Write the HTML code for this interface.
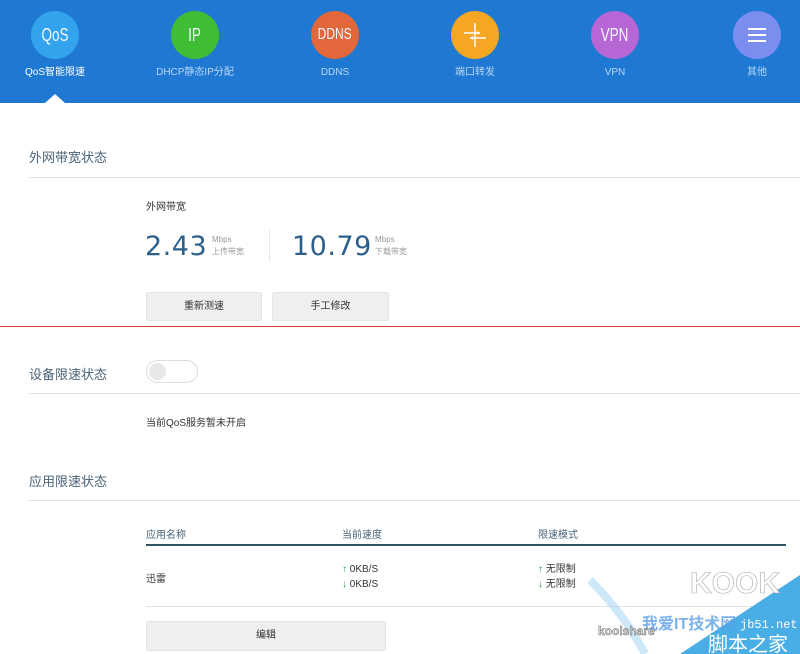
<!DOCTYPE html>
<html><head><meta charset="utf-8"><style>
*{margin:0;padding:0;box-sizing:border-box}
body{width:800px;height:654px;overflow:hidden;background:#fff;font-family:"Liberation Sans","Noto Sans CJK SC",sans-serif;position:relative;color:#333}
.hd{position:absolute;left:0;top:0;width:800px;height:103px;background:#1f79d2}
.it{position:absolute;top:11px;width:120px;text-align:center;margin-left:-60px}
.c{width:48px;height:48px;border-radius:50%;margin:0 auto;color:#f0f8ff;font-size:18px;line-height:48px;overflow:hidden;position:relative}
.c span{display:inline-block;transform:scaleX(0.75)}
.lb{font-size:10px;color:#b9d6f5;margin-top:7px;height:14px;line-height:14px}
.a{position:absolute}
.t{font-size:13px;color:#4a6378}
.ln{position:absolute;height:1px;background:#e2e2e2}
.btn{position:absolute;background:#efefef;border:1px solid #e4e4e4;border-radius:2px;font-size:10px;text-align:center;color:#333}
.s{font-size:10px}
.num{font-size:27px;color:#2d5f8d;font-family:"DejaVu Sans","Liberation Sans",sans-serif;letter-spacing:0.5px}
.sm{font-size:8px;color:#999;line-height:12px}
.g{color:#2e9a3e}
</style></head><body>
<div class="hd">
 <div class="it" style="left:55px"><div class="c" style="background:#34a3ee"><span>QoS</span></div><div class="lb" style="color:#fff">QoS智能限速</div></div>
 <div class="it" style="left:195px"><div class="c" style="background:#3fbd34"><span>IP</span></div><div class="lb">DHCP静态IP分配</div></div>
 <div class="it" style="left:335px"><div class="c" style="background:#e2673a;font-size:16px"><span>DDNS</span></div><div class="lb">DDNS</div></div>
 <div class="it" style="left:475px"><div class="c" style="background:#f5a623"><svg width="48" height="48" style="position:absolute;left:0;top:0"><path d="M24 12V36M13 22H29M19 27H35" stroke="#fff" stroke-width="1.5" fill="none"/><path d="M29 22l-3-2v4zM19 27l3-2v4z" fill="#fff"/></svg></div><div class="lb">端口转发</div></div>
 <div class="it" style="left:615px"><div class="c" style="background:#b766d6"><span>VPN</span></div><div class="lb">VPN</div></div>
 <div class="it" style="left:757px"><div class="c" style="background:#7b8ef0"><svg width="48" height="48" style="position:absolute;left:0;top:0"><path d="M15 18H33M15 24H33M15 30H33" stroke="#fff" stroke-width="2"/></svg></div><div class="lb">其他</div></div>
 <div class="a" style="left:45px;top:94px;width:0;height:0;border-left:10px solid transparent;border-right:10px solid transparent;border-bottom:9px solid #fff"></div>
</div>

<div class="a t" style="left:29px;top:147px">外网带宽状态</div>
<div class="ln" style="left:29px;top:177px;width:771px"></div>
<div class="a s" style="left:146px;top:198px">外网带宽</div>
<div class="a num" style="left:145px;top:231px">2.43</div>
<div class="a sm" style="left:212px;top:234px">Mbps<br>上传带宽</div>
<div class="a" style="left:269px;top:230px;width:1px;height:32px;background:#e6e6e6"></div>
<div class="a num" style="left:292px;top:231px">10.79</div>
<div class="a sm" style="left:375px;top:234px">Mbps<br>下载带宽</div>
<div class="btn" style="left:146px;top:292px;width:116px;height:29px;line-height:27px">重新测速</div>
<div class="btn" style="left:272px;top:292px;width:117px;height:29px;line-height:27px">手工修改</div>
<div class="a" style="left:0;top:326px;width:800px;height:1px;background:#d4463a"></div>

<div class="a t" style="left:29px;top:364px">设备限速状态</div>
<div class="a" style="left:146px;top:360px;width:52px;height:23px;border:1px solid #ddd;border-radius:12px;background:#fff"><div style="position:absolute;left:2px;top:2px;width:17px;height:17px;border-radius:50%;background:#e8e8e8"></div></div>
<div class="ln" style="left:29px;top:393px;width:771px"></div>
<div class="a s" style="left:146px;top:414px">当前QoS服务暂未开启</div>

<div class="a t" style="left:29px;top:471px">应用限速状态</div>
<div class="ln" style="left:29px;top:500px;width:771px"></div>
<div class="a s" style="left:146px;top:526px;color:#4a6378">应用名称</div>
<div class="a s" style="left:342px;top:526px;color:#4a6378">当前速度</div>
<div class="a s" style="left:538px;top:526px;color:#4a6378">限速模式</div>
<div class="a" style="left:146px;top:544px;width:640px;height:2px;background:#2f5566"></div>
<div class="a s" style="left:146px;top:570px">迅雷</div>
<div class="a s" style="left:342px;top:562px;line-height:15px"><span class="g">↑</span> 0KB/S<br><span class="g">↓</span> 0KB/S</div>
<div class="a s" style="left:538px;top:562px;line-height:15px"><span class="g">↑</span> 无限制<br><span class="g">↓</span> 无限制</div>
<div class="ln" style="left:146px;top:606px;width:654px"></div>
<div class="btn" style="left:146px;top:621px;width:240px;height:30px;line-height:28px">编辑</div>

<svg class="a" style="left:580px;top:555px" width="220" height="99">
<polygon points="220,20 220,99 100,99" fill="#4aaee6"/>
<path d="M10 25 Q45 60 65 99" stroke="#9cd2f2" stroke-width="8" fill="none" opacity="0.5"/>
<text x="110" y="38" font-family="Liberation Sans" font-weight="bold" font-size="30" fill="#fff" stroke="#aaa" stroke-width="0.6">KOOK</text>
<text x="62" y="74" font-family="Liberation Sans,Noto Sans CJK SC" font-weight="bold" font-size="16" fill="#5aa0e8" opacity="0.8">我爱IT技术网</text>
<text x="160" y="73" font-family="Liberation Mono" font-size="12" fill="#fff">jb51.net</text>
<text x="18" y="80" font-family="Liberation Sans" font-weight="bold" font-size="12" fill="#ddd" stroke="#666" stroke-width="0.5">koolshare</text>
<text x="128" y="96" font-family="Noto Sans CJK SC" font-size="20" fill="#fff">脚本之家</text>
</svg>
</body></html>
